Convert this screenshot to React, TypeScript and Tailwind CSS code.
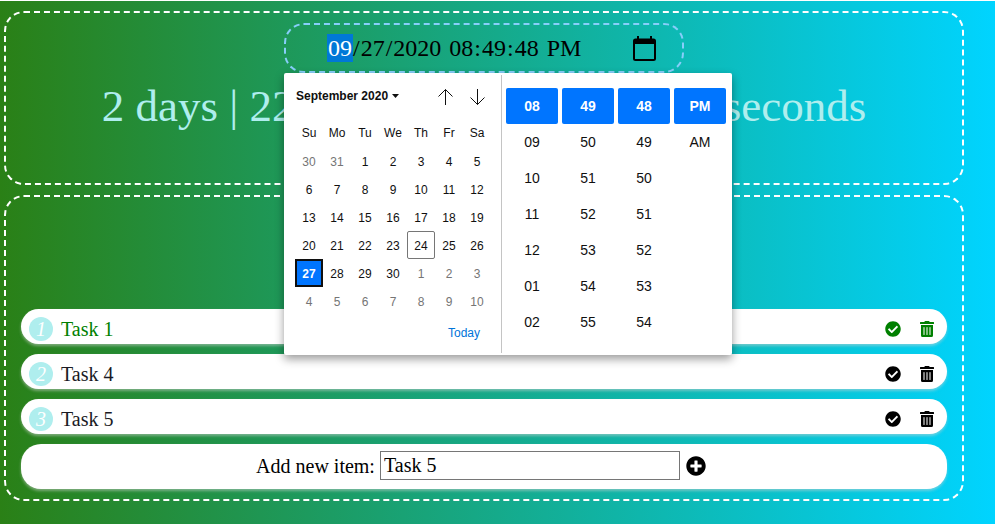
import React from 'react';
import { FaCheckCircle, FaTrashAlt, FaPlusCircle } from 'react-icons/fa';

const WEEKDAYS = ['Su', 'Mo', 'Tu', 'We', 'Th', 'Fr', 'Sa'];

const WEEKS = [
  [30, 31, 1, 2, 3, 4, 5],
  [6, 7, 8, 9, 10, 11, 12],
  [13, 14, 15, 16, 17, 18, 19],
  [20, 21, 22, 23, 24, 25, 26],
  [27, 28, 29, 30, 1, 2, 3],
  [4, 5, 6, 7, 8, 9, 10],
];

const TIME_COLUMNS = [
  { label: 'Hours', values: ['08', '09', '10', '11', '12', '01', '02'] },
  { label: 'Minutes', values: ['49', '50', '51', '52', '53', '54', '55'] },
  { label: 'Seconds', values: ['48', '49', '50', '51', '52', '53', '54'] },
  { label: 'AM or PM', values: ['PM', 'AM'] },
];

const DATE_FIELDS = [
  { label: 'Month', value: '09', after: '/', style: 'w-[26px] bg-[#0078d7] text-white' },
  { label: 'Day', value: '27', after: '/', style: 'w-[26px]' },
  { label: 'Year', value: '2020', after: ' ', style: 'w-[50px]' },
  { label: 'Hour', value: '08', after: ':', style: 'w-[26px]' },
  { label: 'Minute', value: '49', after: ':', style: 'w-[26px]' },
  { label: 'Second', value: '48', after: ' ', style: 'w-[26px]' },
  { label: 'AM/PM', value: 'PM', after: '', style: 'w-[38px]' },
];

const TASKS = [
  { name: 'Task 1', done: true },
  { name: 'Task 4', done: false },
  { name: 'Task 5', done: false },
];

function dayStyle(week: number, day: number) {
  const outside = (week === 0 && day > 20) || (week > 3 && day < 20);
  if (outside) return 'text-[#757575]';
  if (day === 27) return 'border-2 border-[#101010] bg-[#0075ff] font-bold text-white';
  if (day === 24) return 'rounded-xs border border-[#767676]';
  return '';
}

function Arrow({ down = false }: { down?: boolean }) {
  return (
    <svg viewBox="0 0 16 16" className="h-4 w-4" fill="none" stroke="#101010" strokeWidth="1">
      {down ? <path d="M8.5 0v15.5M1.5 8.5l7 7 7-7" /> : <path d="M8.5 16V.5M1.5 7.5l7-7 7 7" />}
    </svg>
  );
}

function Calendar() {
  return (
    <div className="w-[217px] pl-[11px] text-xs">
      <div className="flex h-[46px] items-center pr-4">
        <button type="button" className="flex items-center gap-1 pl-px font-bold">
          September 2020
          <svg viewBox="0 0 7 4" className="h-1 w-[7px]" fill="#101010">
            <path d="M0 0h7L3.5 4z" />
          </svg>
        </button>
        <button type="button" aria-label="Previous month" className="ml-auto pt-0.5">
          <Arrow />
        </button>
        <button type="button" aria-label="Next month" className="ml-4 pt-0.5">
          <Arrow down />
        </button>
      </div>
      <table className="table-fixed border-collapse">
        <thead>
          <tr className="h-7">
            {WEEKDAYS.map((d) => (
              <th key={d} scope="col" className="w-7 p-0 text-center font-normal">
                {d}
              </th>
            ))}
          </tr>
        </thead>
        <tbody>
          {WEEKS.map((week, w) => (
            <tr key={w}>
              {week.map((day) => (
                <td key={day} className="p-0">
                  <button type="button" className={`flex h-7 w-7 items-center justify-center pt-0.5 ${dayStyle(w, day)}`}>
                    {day}
                  </button>
                </td>
              ))}
            </tr>
          ))}
        </tbody>
      </table>
      <div className="flex justify-end pt-2 pr-[21px]">
        <button type="button" className="leading-5 text-[#0074d9]">
          Today
        </button>
      </div>
    </div>
  );
}

function TimeList() {
  return (
    <div className="flex flex-1 gap-1 pt-[15px] pl-1 text-sm">
      {TIME_COLUMNS.map((col) => (
        <div key={col.label} role="group" aria-label={col.label} className="flex flex-col">
          {col.values.map((v, i) => (
            <button
              key={v}
              type="button"
              className={`flex h-9 w-[52px] items-center justify-center rounded-xs ${
                i === 0 ? 'bg-[#0075ff] font-bold text-white' : ''
              }`}
            >
              {v}
            </button>
          ))}
        </div>
      ))}
    </div>
  );
}

function Picker() {
  return (
    <div className="absolute top-full left-0 z-10 flex h-[282px] w-[448px] rounded-xs bg-white font-['Liberation_Sans',Arial,sans-serif] text-[#101010] shadow-[0_4px_10px_rgba(0,0,0,0.4)]">
      <Calendar />
      <div className="mt-0.5 mb-0.5 w-px bg-[#c4c4c4]" />
      <TimeList />
    </div>
  );
}

function DateField() {
  return (
    <div
      role="group"
      aria-label="Target date"
      className="flex h-[50px] items-center rounded-[20px] border-2 border-dashed border-[#87cefa] pr-[26px] pl-[41px] text-2xl leading-7"
    >
      {DATE_FIELDS.map((f) => (
        <React.Fragment key={f.label}>
          <input
            type="text"
            aria-label={f.label}
            defaultValue={f.value}
            className={`h-7 px-px outline-none ${f.style}`}
          />
          {f.after && <span className="whitespace-pre">{f.after}</span>}
        </React.Fragment>
      ))}
      <button type="button" aria-label="Show date picker" className="ml-auto">
        <svg viewBox="0 0 23 25" className="h-[25px] w-[23px]" fill="#000">
          <path
            fillRule="evenodd"
            d="M4 0h2v2.5h11V0h2v2.5h1.5A2.5 2.5 0 0 1 23 5v17.500a2.5 2.5 0 0 1-2.5 2.5h-18A2.5 2.5 0 0 1 0 22.500V5a2.5 2.5 0 0 1 2.5-2.5H4zM2 8v15h19V8z"
          />
        </svg>
      </button>
    </div>
  );
}

export default function App() {
  return (
    <div className="flex min-h-screen flex-col gap-2.5 border-t border-white bg-linear-to-r/srgb from-[#2a8016] to-[#00d4ff] pt-2.5 pr-[31px] pl-1 font-['Liberation_Serif','Times_New_Roman',serif] text-xl text-black">
      <section className="flex h-[174px] flex-col items-center rounded-[20px] border-2 border-dashed border-white pt-2.5">
        <div className="relative w-[400px]">
          <DateField />
          <Picker />
        </div>
        <p className="mt-2 text-[45px] leading-[50px] whitespace-nowrap text-[#afeeee]">
          2 days | 22 hours | 28 minutes | 32 seconds
        </p>
      </section>

      <section className="rounded-[20px] border-2 border-dashed border-white px-[15px] pt-28 pb-2.5">
        <ul className="flex flex-col gap-2.5">
          {TASKS.map((task, i) => (
            <li
              key={task.name}
              className={`flex h-[35px] items-center rounded-[20px] bg-white pt-1 pr-[13px] pl-2 shadow-[0_2px_3px_rgba(211,211,211,0.5)] ${
                task.done ? 'text-[#008000]' : 'text-[#1a1a24]'
              }`}
            >
              <span className="flex h-6 w-6 items-center justify-center rounded-full bg-[#afeeee] text-white italic">
                {i + 1}
              </span>
              <span className="ml-2">{task.name}</span>
              <span className={`ml-auto flex gap-[19px] text-base ${task.done ? '' : 'text-black'}`}>
                <button type="button" aria-label={`Complete ${task.name}`}>
                  <FaCheckCircle />
                </button>
                <button type="button" aria-label={`Delete ${task.name}`}>
                  <FaTrashAlt className="w-3.5" />
                </button>
              </span>
            </li>
          ))}
        </ul>
        <form className="mt-2.5 flex h-[45px] items-center justify-center rounded-[20px] bg-white pr-1.5 pb-0.5 shadow-[0_2px_3px_rgba(211,211,211,0.5)]">
          <label htmlFor="new-item">Add new item:</label>
          <input
            id="new-item"
            type="text"
            defaultValue="Task 5"
            className="ml-[5px] h-[29px] w-[300px] border border-[#767676] px-[3px]"
          />
          <button type="button" aria-label="Add item" className="ml-1.5">
            <FaPlusCircle />
          </button>
        </form>
      </section>
    </div>
  );
}
